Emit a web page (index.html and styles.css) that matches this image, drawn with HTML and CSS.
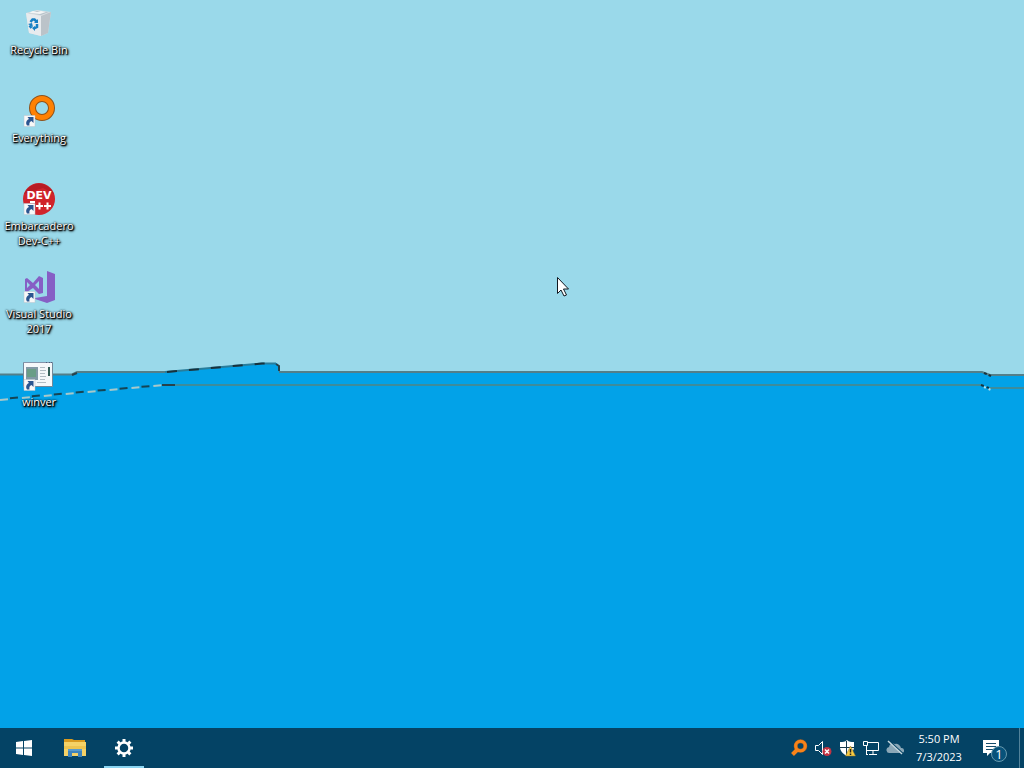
FILE: index.html
```html
<!DOCTYPE html>
<html lang="en">
<head>
<meta charset="utf-8">
<meta name="viewport" content="width=device-width, initial-scale=1">
<title>Desktop</title>
<link rel="stylesheet" href="styles.css">
</head>
<body>
<svg width="0" height="0" class="defs" aria-hidden="true">
  <defs>
    <g id="shortcut">
      <path fill="#f8f8f8" stroke="#b9c3cd" stroke-width=".5" d="M1 20.500h11v11H1z"/>
      <path fill="#2b5590" d="M4.500 22H10.500v6l-2-2c-2 1-2.500 2-2 4.500H4c-1.500-2.500-1-5 2-6.500z"/>
    </g>
  </defs>
</svg>
<main class="desktop">
  <svg class="wallpaper" viewBox="0 0 1024 728" preserveAspectRatio="none" aria-hidden="true">
    <path fill="#02a2e8" d="M0 374H72L78 372H165L262 363H277L280 372H982L990 375H1024V728H0z"/>
    <g fill="none" stroke="#547f88" stroke-width="2">
      <path d="M0 374.500H72L77 372H165M279 372H982L990 375H1024"/>
      <path stroke="#3d8c9c" d="M165 385H982M990 388H1024"/>
      <path stroke="#287d9b" d="M165 372L262 363.500H276"/>
      <path stroke="#17323d" stroke-dasharray="10 12" d="M167 372L262 363.500H276"/>
      <path stroke="#27424b" d="M72 375L77 373M276 364L279 366V371"/>
      <path stroke="#17323d" stroke-dasharray="3 2" d="M984 373L991 376"/>
      <path stroke="#a8c8c9" stroke-dasharray="8 14" d="M0 400L163 385"/>
      <path stroke="#154454" stroke-dasharray="8 14" stroke-dashoffset="-10" d="M0 399L163 385"/>
      <path stroke="#27424b" d="M162 385H175"/>
      <path stroke="#17323d" stroke-dasharray="3 3" d="M981 385L989 388"/>
      <path stroke="#b8dfe8" stroke-dasharray="2 3" d="M984 387L991 390"/>
    </g>
  </svg>

  <nav class="shortcuts" aria-label="Desktop icons">
    <a class="shortcut" href="#recycle-bin">
      <svg viewBox="0 0 32 32" aria-hidden="true">
        <path fill="#d9dfe3" d="M3 6l11-3 14 2-3 21-7 3-12-3z"/>
        <path fill="#e7ebee" d="M3 6l15 3v20L6 26z"/>
        <path fill="#bbc3c9" d="M18 9l10-4-3 21-7 3z"/>
        <path fill="#b7c3ca" d="M5 6l9-2 12 1-8 3z"/>
        <path fill="#f4f5f5" d="M6 6l4-2 4 1 4-1 5 1-6 2z"/>
        <g fill="none" stroke="#1680c4" stroke-width="2.500"><path d="M7.500 15l2-2.500h2l2 2M14 17l0 3-3 1.500M8.500 21L6.500 18.500"/></g>
        <path fill="#1680c4" d="M11 16l4 0v-4zM12 19v5l-3-3zM5 17l4-1 1 4z"/>
      </svg>
      <span>Recycle Bin</span>
    </a>
    <a class="shortcut" href="#everything">
      <svg viewBox="0 0 32 32" aria-hidden="true">
        <circle cx="19" cy="13" r="9.500" fill="none" stroke="#8f521b" stroke-width="7"/>
        <circle cx="19" cy="13" r="9.500" fill="none" stroke="#ff8104" stroke-width="5"/>
        <use href="#shortcut"/>
      </svg>
      <span>Everything</span>
    </a>
    <a class="shortcut" href="#dev-cpp">
      <svg viewBox="0 0 32 32" aria-hidden="true">
        <circle cx="16" cy="16" r="16" fill="#d0242b"/>
        <path fill="#a91620" d="M1 11A16 16 0 0 1 31 11L20 5z" opacity=".6"/>
        <text class="dev-name" x="16" y="16" text-anchor="middle">DEV</text>
        <path stroke="#fff" stroke-width="2" d="M7 19h5M13 23h7M16.500 19.500v7M21 23h7M24.500 19.500v7"/>
        <use href="#shortcut"/>
      </svg>
      <span>Embarcadero<br>Dev-C++</span>
    </a>
    <a class="shortcut" href="#visual-studio">
      <svg viewBox="0 0 32 32" aria-hidden="true">
        <path fill="#865fc5" d="M24 0l8 3v26l-8 3-12-4v-1l12-2z"/>
        <path fill="#865fc5" fill-rule="evenodd" d="M2 8l2-1 6 5 6-7 4 2v15l-4 1-6-6-6 4-2-1zm2 3v6l3-3zm12-1l-4 4 4 4z"/>
        <use href="#shortcut"/>
      </svg>
      <span>Visual Studio<br>2017</span>
    </a>
    <a class="shortcut" href="#winver">
      <svg viewBox="0 0 32 32" aria-hidden="true">
        <path fill="#f5f8fa" stroke="#71889a" d="M.5 3.500h29v24H.5z"/>
        <path fill="#8594aa" d="M1 3h29v1H1z"/>
        <path fill="#4a6380" d="M23 3h1v1h-1zM26 3h1v1h-1zM28 3h1v1h-1z"/>
        <path fill="#8199a5" d="M3 8h12v13H3z"/><path fill="#699d86" d="M4 10h9v8H4z"/>
        <path stroke="#b2bdc4" d="M17 8.500h5M17 11.500h6M17 14.500h5M17 17.500h6M17 20.500h5M14 23.500h9"/>
        <path fill="#315d55" d="M25 8h2v9h-2z"/>
        <use href="#shortcut"/>
      </svg>
      <span>winver</span>
    </a>
  </nav>

  <svg class="pointer" viewBox="0 0 12 20" aria-hidden="true"><path fill="#fff" stroke="#111820" d="M.5.5v16l3.500-3.500 3 6 2.500-1-3-6h5z"/></svg>
</main>

<footer class="taskbar">
  <button class="start" aria-label="Start"><svg width="16" height="16" viewBox="0 0 16 16"><path fill="#fff" d="M0 2l7-1v6.500H0zM8 1l8-1v7.500H8zM0 8.500h7V15l-7-1zM8 8.500h8V16l-8-1z"/></svg></button>
  <div class="apps">
    <button class="app" aria-label="File Explorer"><svg width="22" height="20" viewBox="0 0 22 20"><path fill="#d99b20" d="M0 1h8l2 1h11v4H0z"/><path fill="#f5d267" d="M0 4h22v14H0z"/><path fill="#edc450" d="M0 8h22v3H0z"/><path fill="#3d83bd" d="M4 11h14v8h-4v-4H8v4H4z"/><path fill="#599bcc" d="M4 11h14v2H4z"/></svg></button>
    <button class="app active" aria-label="Settings"><svg width="20" height="20" viewBox="0 0 20 20"><circle cx="10" cy="10" r="5.500" fill="none" stroke="#fff" stroke-width="2.500"/><g stroke="#fff" stroke-width="3"><path d="M10 1v3M10 16v3M1 10h3M16 10h3M3.600 3.600l2.200 2.200M14.200 14.200l2.200 2.200M3.600 16.400l2.200-2.200M14.200 5.800l2.200-2.200"/></g></svg></button>
  </div>
  <div class="tray">
    <button aria-label="Everything search"><svg width="18" height="18" viewBox="0 0 18 18"><circle cx="10.500" cy="7" r="4.800" fill="none" stroke="#9b5d29" stroke-width="4"/><circle cx="10.500" cy="7" r="4.800" fill="none" stroke="#f88319" stroke-width="3"/><path stroke="#f88319" stroke-width="4" d="M7 11L2.500 15.500"/></svg></button>
    <button aria-label="Volume, muted"><svg width="18" height="18" viewBox="0 0 18 18"><path fill="none" stroke="#fff" d="M1.500 6.500h3l4-4v13l-4-4h-3z"/><circle cx="13" cy="12.500" r="4.500" fill="#c43343"/><path stroke="#fff" stroke-width="1.500" d="M11 10.500l4 4M15 10.500l-4 4"/></svg></button>
    <button aria-label="Windows Security"><svg width="18" height="18" viewBox="0 0 18 18"><path fill="#fff" d="M9 1c2 2 4 2 7 2v5c0 4-3 7-7 9-4-2-7-5-7-9V3c3 0 5 0 7-2z"/><path stroke="#16384c" d="M8.500 2v14M2 8.500h14"/><path fill="#f8cb42" stroke="#8a702a" stroke-width=".5" d="M12.500 7l5 10h-10z"/><path stroke="#222" stroke-width="1.500" d="M12.500 10v3.500M12.500 14.500v1.500"/></svg></button>
    <button aria-label="Network"><svg width="18" height="18" viewBox="0 0 18 18"><path fill="none" stroke="#fff" d="M6 3.500h10.500v8H4.500V8M11 11.500v4M7 15.500h8M1.500 2.500h4v4h-4zM4.500 6.500v9M4 15.500h2"/></svg></button>
    <button aria-label="OneDrive, offline"><svg width="18" height="18" viewBox="0 0 18 18"><path fill="#8aa7b7" d="M4 14a3 3 0 0 1-1-6 4 4 0 0 1 6-3 5 5 0 0 1 6 4 2.500 2.500 0 0 1 1 5z"/><path stroke="#044365" stroke-width="2" d="M3 2l14 13"/><path stroke="#c8d9e0" stroke-width="1.500" d="M2 2l14 13"/></svg></button>
    <button class="clock"><time datetime="2023-07-03T17:50">5:50 PM<br>7/3/2023</time></button>
    <button class="notifications" aria-label="1 notification"><svg width="26" height="26" viewBox="0 0 26 26"><path fill="#fff" d="M1 4h16v13H8l-3 3v-3H1z"/><path stroke="#174d6c" d="M4 7.500h10M4 10.500h10M4 13.500h7"/><circle cx="17" cy="18" r="7.500" fill="#07527a" stroke="#6799ad"/><text class="badge-count" x="17" y="23" text-anchor="middle">1</text></svg></button>
    <button class="show-desktop" aria-label="Show desktop"></button>
  </div>
</footer>
</body>
</html>
```
FILE: styles.css
```css
* { box-sizing: border-box; }
body {
  min-height: 100vh;
  margin: 0;
  display: flex;
  flex-direction: column;
  overflow: hidden;
  font-family: "Open Sans", "Noto Sans", sans-serif;
  font-size: 11px;
  color: #fff;
}
.defs { position: absolute; }
.desktop { position: relative; flex: 1; background: #9ad9ea; }
.wallpaper { position: absolute; inset: 0; width: 100%; height: 100%; }
.shortcuts {
  position: relative;
  display: grid;
  grid-auto-rows: 88px;
  justify-content: start;
  padding-top: 7px;
}
.shortcut {
  width: 78px;
  display: flex;
  flex-direction: column;
  align-items: center;
  gap: 3px;
  color: #fff;
  text-align: center;
  text-decoration: none;
  line-height: 15px;
  text-shadow: 1px 1px 1px #000, 1px 1px 2px #000, 1px 1px 3px #000, 0 0 2px #000;
}
.shortcut svg { width: 32px; height: 32px; }
.dev-name { font: bold 11px "DejaVu Sans", sans-serif; fill: #fff; text-shadow: none; }
.pointer { position: absolute; left: 557px; top: 277px; width: 12px; height: 20px; }
.taskbar { height: 40px; display: flex; background: #044365; }
button {
  display: flex;
  align-items: center;
  justify-content: center;
  padding: 0;
  border: 0;
  background: none;
  color: inherit;
  font: inherit;
}
.start { width: 48px; }
.apps { display: flex; gap: 9px; margin-left: 7px; }
.app { width: 40px; border-bottom: 2px solid transparent; border-top: 2px solid transparent; }
.active { border-bottom-color: #8bd5f2; }
.tray { display: flex; margin-left: auto; }
.tray button { width: 24px; }
.tray .clock { width: 64px; line-height: 18px; }
.tray .notifications { width: 48px; padding-top: 2px; }
.tray .show-desktop { width: 5px; border-left: 1px solid #52829a; }
.badge-count { font: 13px "Open Sans", sans-serif; fill: #fff; }
```
